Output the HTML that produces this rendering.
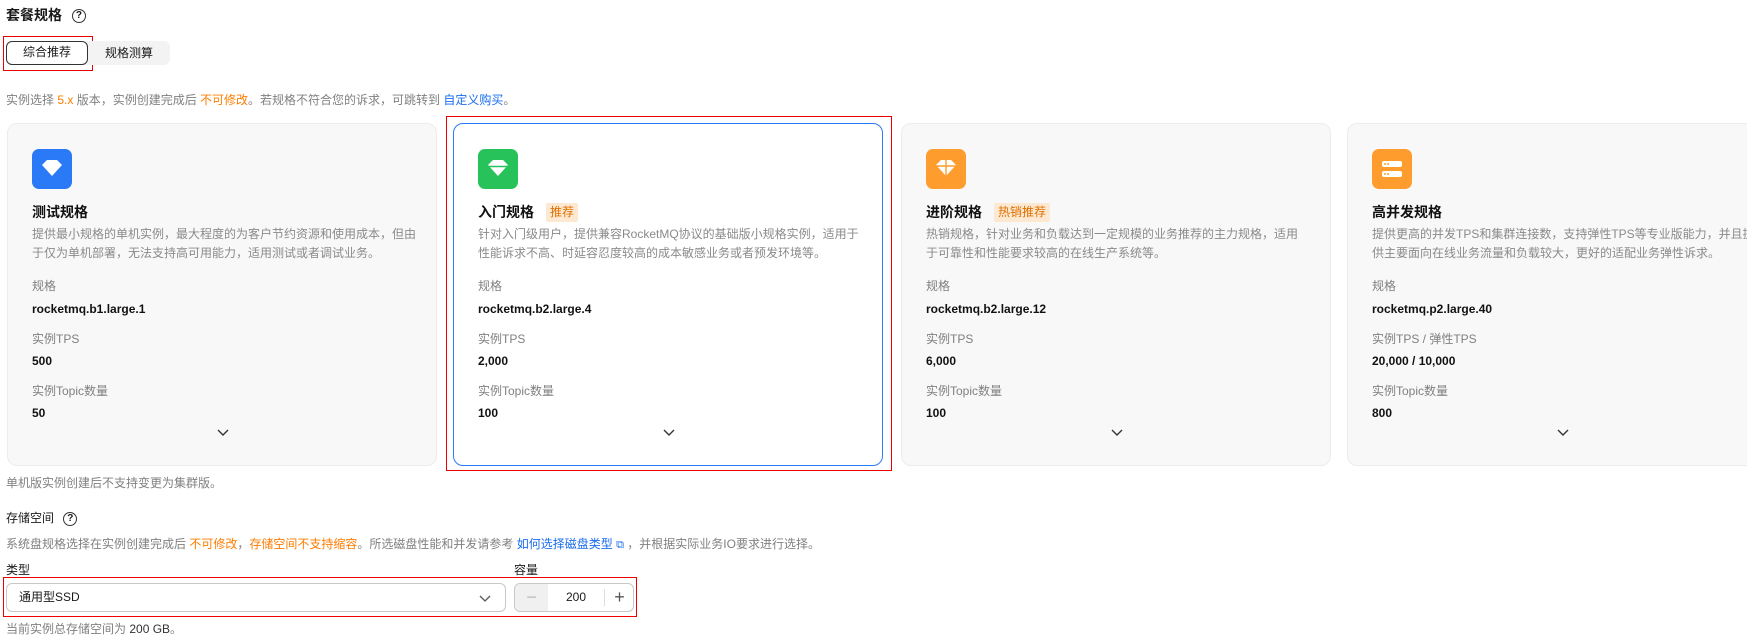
<!DOCTYPE html>
<html><head><meta charset="utf-8"><style>
*{box-sizing:border-box;margin:0;padding:0}
body{width:1747px;height:643px;overflow:hidden;background:#fff;font-family:"Liberation Sans","Noto Sans CJK SC",sans-serif;color:#191919;position:relative;font-size:12px}
.abs{position:absolute;white-space:nowrap}
.q{display:inline-block;width:14px;height:14px;border:1.3px solid #333;border-radius:50%;font-size:10px;line-height:12px;text-align:center;font-weight:bold;vertical-align:middle}
.gray{color:#808080}
.or{color:#ff7d00}
.bl{color:#1a6cf0}
.card{position:absolute;top:123px;width:430px;height:343px;background:#f8f8f8;border:1px solid #ececec;border-radius:10px}
.card.sel{background:#fff;border:1.5px solid #2a7af8}
.icon{position:absolute;left:24px;top:25px;width:40px;height:40px;border-radius:7px}
.ct{position:absolute;left:24px;top:78px;font-size:14px;font-weight:bold;color:#111;line-height:20px}
.tag{display:inline-block;margin-left:12px;padding:0 4px;background:#fde8d2;color:#e07000;font-size:12px;font-weight:normal;line-height:19px;border-radius:2px;vertical-align:1px}
.desc{position:absolute;left:24px;top:101px;width:386px;color:#8a8a8a;font-size:12px;line-height:19px;white-space:normal}
.lb{position:absolute;left:24px;color:#808080;font-size:12px;line-height:16px}
.vl{position:absolute;left:24px;font-weight:bold;font-size:12px;color:#111;line-height:16px}
.chev{position:absolute;left:209px;top:305px}
</style></head><body>
<div class="abs" style="left:6px;top:5px;font-size:14px;font-weight:bold">套餐规格 <span class="q" style="margin-left:6px">?</span></div>
<div class="abs" style="left:3px;top:36px;width:90px;height:35px;border:1.5px solid #e00"></div>
<div class="abs" style="left:6px;top:41px;width:164px;height:24px;background:#f3f3f3;border-radius:6px"></div>
<div class="abs" style="left:6px;top:41px;width:82px;height:24px;background:#fff;border:1.5px solid #333;border-radius:6px;text-align:center;line-height:21px;font-size:12px">综合推荐</div>
<div class="abs" style="left:105px;top:41px;line-height:24px;font-size:12px">规格测算</div>
<div class="abs gray" style="left:6px;top:91px;font-size:12px">实例选择 <span class="or">5.x</span> 版本，实例创建完成后 <span class="or">不可修改</span>。若规格不符合您的诉求，可跳转到 <span class="bl">自定义购买</span>。</div>

<div class="abs" style="left:446px;top:116px;width:446px;height:355px;border:1.5px solid #e00"></div>

<div class="card" style="left:7px">
 <div class="icon" style="background:#2a7af8"><svg width="40" height="40"><path d="M10 16l5-5h10l5 5-10 11z" fill="#fff"/></svg></div>
 <div class="ct">测试规格</div>
 <div class="desc">提供最小规格的单机实例，最大程度的为客户节约资源和使用成本，但由于仅为单机部署，无法支持高可用能力，适用测试或者调试业务。</div>
 <div class="lb" style="top:154px">规格</div><div class="vl" style="top:177px">rocketmq.b1.large.1</div>
 <div class="lb" style="top:207px">实例TPS</div><div class="vl" style="top:229px">500</div>
 <div class="lb" style="top:259px">实例Topic数量</div><div class="vl" style="top:281px">50</div>
 <svg class="chev" width="12" height="8"><path d="M1 1l5 5 5-5" fill="none" stroke="#333" stroke-width="1.4"/></svg>
</div>
<div class="card sel" style="left:453px">
 <div class="icon" style="background:#27c25a"><svg width="40" height="40"><path d="M10 16l5-5h10l5 5-10 11z" fill="#fff"/><path d="M10 17.5h20" stroke="#27c25a" stroke-width="1.6"/></svg></div>
 <div class="ct">入门规格<span class="tag">推荐</span></div>
 <div class="desc">针对入门级用户，提供兼容RocketMQ协议的基础版小规格实例，适用于性能诉求不高、时延容忍度较高的成本敏感业务或者预发环境等。</div>
 <div class="lb" style="top:154px">规格</div><div class="vl" style="top:177px">rocketmq.b2.large.4</div>
 <div class="lb" style="top:207px">实例TPS</div><div class="vl" style="top:229px">2,000</div>
 <div class="lb" style="top:259px">实例Topic数量</div><div class="vl" style="top:281px">100</div>
 <svg class="chev" width="12" height="8"><path d="M1 1l5 5 5-5" fill="none" stroke="#333" stroke-width="1.4"/></svg>
</div>
<div class="card" style="left:901px">
 <div class="icon" style="background:#ff9c2e"><svg width="40" height="40"><path d="M10 16l5-5h10l5 5-10 11z" fill="#fff"/><path d="M10 17h20M20 11v16" stroke="#ff9c2e" stroke-width="1.4"/></svg></div>
 <div class="ct">进阶规格<span class="tag">热销推荐</span></div>
 <div class="desc" style="width:382px">热销规格，针对业务和负载达到一定规模的业务推荐的主力规格，适用于可靠性和性能要求较高的在线生产系统等。</div>
 <div class="lb" style="top:154px">规格</div><div class="vl" style="top:177px">rocketmq.b2.large.12</div>
 <div class="lb" style="top:207px">实例TPS</div><div class="vl" style="top:229px">6,000</div>
 <div class="lb" style="top:259px">实例Topic数量</div><div class="vl" style="top:281px">100</div>
 <svg class="chev" width="12" height="8"><path d="M1 1l5 5 5-5" fill="none" stroke="#333" stroke-width="1.4"/></svg>
</div>
<div class="card" style="left:1347px">
 <div class="icon" style="background:#ff9c2e"><svg width="40" height="40"><rect x="10" y="12" width="20" height="6" rx="2" fill="#fff"/><rect x="10" y="22" width="20" height="6" rx="2" fill="#fff"/><circle cx="13" cy="15" r="1" fill="#ff9c2e"/><circle cx="16" cy="15" r="1" fill="#ff9c2e"/><circle cx="13" cy="25" r="1" fill="#ff9c2e"/><circle cx="16" cy="25" r="1" fill="#ff9c2e"/></svg></div>
 <div class="ct">高并发规格</div>
 <div class="desc" style="width:386px">提供更高的并发TPS和集群连接数，支持弹性TPS等专业版能力，并且提供主要面向在线业务流量和负载较大，更好的适配业务弹性诉求。</div>
 <div class="lb" style="top:154px">规格</div><div class="vl" style="top:177px">rocketmq.p2.large.40</div>
 <div class="lb" style="top:207px">实例TPS / 弹性TPS</div><div class="vl" style="top:229px">20,000 / 10,000</div>
 <div class="lb" style="top:259px">实例Topic数量</div><div class="vl" style="top:281px">800</div>
 <svg class="chev" width="12" height="8"><path d="M1 1l5 5 5-5" fill="none" stroke="#333" stroke-width="1.4"/></svg>
</div>

<div class="abs gray" style="left:6px;top:474px;font-size:12px">单机版实例创建后不支持变更为集群版。</div>
<div class="abs" style="left:6px;top:509px;font-size:12px">存储空间 <span class="q" style="margin-left:6px">?</span></div>
<div class="abs gray" style="left:6px;top:535px;font-size:12px">系统盘规格选择在实例创建完成后 <span class="or">不可修改</span>，<span class="or">存储空间不支持缩容</span>。所选磁盘性能和并发请参考 <span class="bl">如何选择磁盘类型</span> <span class="bl" style="font-size:11px">⧉</span> ，并根据实际业务IO要求进行选择。</div>
<div class="abs" style="left:6px;top:561px;font-size:12px">类型</div>
<div class="abs" style="left:514px;top:561px;font-size:12px">容量</div>
<div class="abs" style="left:3px;top:577px;width:634px;height:40px;border:1.5px solid #e00"></div>
<div class="abs" style="left:6px;top:583px;width:500px;height:29px;border:1px solid #c8c8c8;border-radius:6px;padding-left:12px;line-height:27px;font-size:12px">通用型SSD
 <svg style="position:absolute;right:14px;top:11px" width="12" height="8"><path d="M1 1l5 5 5-5" fill="none" stroke="#555" stroke-width="1.3"/></svg></div>
<div class="abs" style="left:514px;top:583px;width:120px;height:29px;border:1px solid #c8c8c8;border-radius:6px;overflow:hidden">
 <div style="position:absolute;left:0;top:0;width:33px;height:27px;background:#f0f0f0;color:#bbb;text-align:center;line-height:26px;font-size:18px">−</div>
 <div style="position:absolute;left:33px;width:56px;top:0;line-height:27px;text-align:center;font-size:12px">200</div>
 <div style="position:absolute;left:89px;top:5px;height:17px;border-left:1px solid #ddd"></div>
 <div style="position:absolute;left:90px;width:29px;top:0;line-height:26px;text-align:center;font-size:18px;color:#555">+</div>
</div>
<div class="abs gray" style="left:6px;top:620px;font-size:12px">当前实例总存储空间为 <span style="color:#333">200 GB</span>。</div>
</body></html>
